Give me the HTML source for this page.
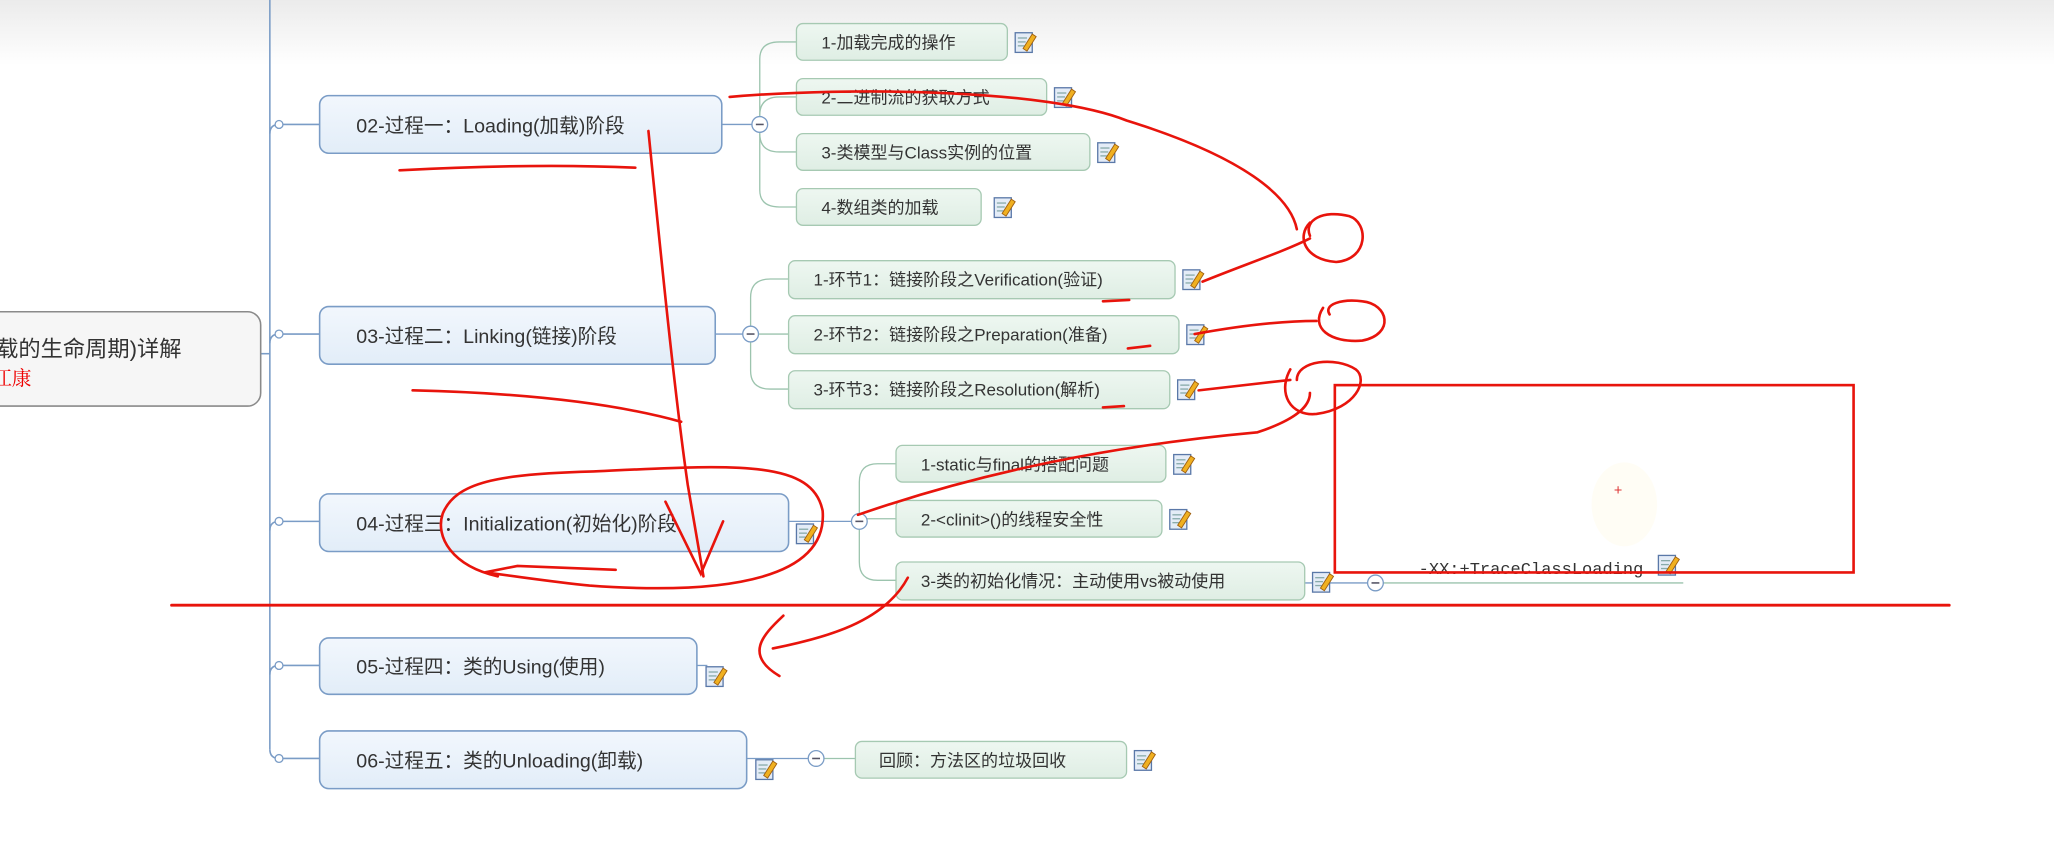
<!DOCTYPE html>
<html><head><meta charset="utf-8"><style>
html,body{margin:0;padding:0;background:#fff;width:2054px;height:841px;overflow:hidden}
svg{display:block}
text{font-family:"Liberation Sans","Noto Sans CJK SC",sans-serif;fill:#333}
</style></head><body>
<svg width="2054" height="841" viewBox="0 0 1568 642" preserveAspectRatio="none" xmlns="http://www.w3.org/2000/svg">
<defs>
<linearGradient id="top" x1="0" y1="0" x2="0" y2="1"><stop offset="0" stop-color="#ebebeb"/><stop offset="1" stop-color="#fff"/></linearGradient>
<linearGradient id="bx" x1="0" y1="0" x2="0" y2="1"><stop offset="0" stop-color="#f2f7fd"/><stop offset="1" stop-color="#e2edf8"/></linearGradient>
<linearGradient id="sb" x1="0" y1="0" x2="0" y2="1"><stop offset="0" stop-color="#eef7f1"/><stop offset="1" stop-color="#dfeee4"/></linearGradient>
<g id="note"><rect x="0" y="0" width="13" height="15" fill="#e4ecf7" stroke="#5a78a8" stroke-width="1"/><line x1="2" y1="4" x2="9" y2="4" stroke="#8aa" /><line x1="2" y1="7" x2="8" y2="7" stroke="#8aa"/><line x1="2" y1="10" x2="7" y2="10" stroke="#8aa"/><path d="M6 12 L13 1 L16 3 L9 14 Z" fill="#f0b020" stroke="#a06010" stroke-width="0.7"/></g>
</defs>
<rect x="0" y="0" width="1568" height="50" fill="url(#top)"/>
<line x1="206" y1="0" x2="206" y2="572" stroke="#7a9cc6" stroke-width="1.2"/>
<g fill="none" stroke="#7a9cc6" stroke-width="1.2">
<path d="M206 102 Q206 95 213 95 L244 95"/><path d="M206 262 Q206 255 213 255 L244 255"/>
<path d="M206 405 Q206 398 213 398 L244 398"/><path d="M206 515 Q206 508 213 508 L244 508"/>
<path d="M206 572 Q206 579 213 579 L244 579"/><line x1="199" y1="270" x2="206" y2="270"/>
</g>
<g fill="#fff" stroke="#7a9cc6"><circle cx="213" cy="95" r="3"/><circle cx="213" cy="255" r="3"/><circle cx="213" cy="398" r="3"/><circle cx="213" cy="508" r="3"/><circle cx="213" cy="579" r="3"/></g>
<rect x="-20" y="238" width="219" height="72" rx="10" fill="#f6f6f6" stroke="#8a8a8a" stroke-width="1.2"/>
<text x="-3" y="272" font-size="17" fill="#222">载的生命周期)详解</text>
<text x="-6" y="294" font-size="15" style="fill:#e00;font-family:'Noto Serif CJK SC',serif">江康</text>
<g stroke="#7a9cc6" stroke-width="1.2" fill="url(#bx)">
<rect x="244" y="73" width="307" height="44" rx="7"/><rect x="244" y="234" width="302" height="44" rx="7"/>
<rect x="244" y="377" width="358" height="44" rx="7"/><rect x="244" y="487" width="288" height="43" rx="7"/>
<rect x="244" y="558" width="326" height="44" rx="7"/>
</g>
<g font-size="15">
<text x="272" y="101">02-过程一：Loading(加载)阶段</text>
<text x="272" y="262">03-过程二：Linking(链接)阶段</text>
<text x="272" y="405">04-过程三：Initialization(初始化)阶段</text>
<text x="272" y="514">05-过程四：类的Using(使用)</text>
<text x="272" y="586">06-过程五：类的Unloading(卸载)</text>
</g>
<g fill="none" stroke="#9cc4ae" stroke-width="1">
<path d="M580 95 L580 45 Q580 32 595 32 L608 32"/><path d="M580 88 Q580 74 595 74 L608 74"/>
<path d="M580 102 Q580 116 595 116 L608 116"/><path d="M580 95 L580 145 Q580 158 595 158 L608 158"/>
<path d="M573 255 L573 227 Q573 213 588 213 L602 213"/><path d="M573 255 L602 255"/>
<path d="M573 255 L573 283 Q573 297 588 297 L602 297"/>
<path d="M656 398 L656 368 Q656 354 670 354 L684 354"/><path d="M656 398 L656 396 L684 396"/>
<path d="M656 398 L656 429 Q656 443 670 443 L684 443"/>
<path d="M623 579 L653 579"/><path d="M1050 445 L1285 445"/>
</g>
<g fill="none" stroke="#7a9cc6"><line x1="551" y1="95" x2="574" y2="95"/><line x1="546" y1="255" x2="567" y2="255"/><line x1="602" y1="398" x2="650" y2="398"/><line x1="570" y1="579" x2="617" y2="579"/><line x1="996" y1="445" x2="1044" y2="445"/><line x1="532" y1="508" x2="540" y2="508"/></g>
<g fill="#fff" stroke="#7a9cc6" stroke-width="1"><circle cx="580" cy="95" r="6"/><circle cx="573" cy="255" r="6"/><circle cx="656" cy="398" r="6"/><circle cx="623" cy="579" r="6"/><circle cx="1050" cy="445" r="6"/></g>
<g stroke="#556" stroke-width="1.2"><line x1="577" y1="95" x2="583" y2="95"/><line x1="570" y1="255" x2="576" y2="255"/><line x1="653" y1="398" x2="659" y2="398"/><line x1="620" y1="579" x2="626" y2="579"/><line x1="1047" y1="445" x2="1053" y2="445"/></g>
<g stroke="#a6c9b2" stroke-width="1" fill="url(#sb)">
<rect x="608" y="18" width="161" height="28" rx="5"/><rect x="608" y="60" width="191" height="28" rx="5"/>
<rect x="608" y="102" width="224" height="28" rx="5"/><rect x="608" y="144" width="141" height="28" rx="5"/>
<rect x="602" y="199" width="295" height="29" rx="5"/><rect x="602" y="241" width="298" height="29" rx="5"/>
<rect x="602" y="283" width="291" height="29" rx="5"/>
<rect x="684" y="340" width="206" height="28" rx="5"/><rect x="684" y="382" width="203" height="28" rx="5"/>
<rect x="684" y="429" width="312" height="29" rx="5"/><rect x="653" y="566" width="207" height="28" rx="5"/>
</g>
<g font-size="13">
<text x="627" y="37">1-加载完成的操作</text><text x="627" y="79">2-二进制流的获取方式</text>
<text x="627" y="121">3-类模型与Class实例的位置</text><text x="627" y="163">4-数组类的加载</text>
<text x="621" y="218">1-环节1：链接阶段之Verification(验证)</text><text x="621" y="260">2-环节2：链接阶段之Preparation(准备)</text>
<text x="621" y="302">3-环节3：链接阶段之Resolution(解析)</text>
<text x="703" y="359">1-static与final的搭配问题</text><text x="703" y="401">2-&lt;clinit&gt;()的线程安全性</text>
<text x="703" y="448">3-类的初始化情况：主动使用vs被动使用</text><text x="671" y="585">回顾：方法区的垃圾回收</text>
<text x="1083" y="438" style="font-family:'Liberation Mono',monospace" font-size="13">-XX:+TraceClassLoading</text>
</g>
<g><use href="#note" x="775" y="25"/><use href="#note" x="805" y="67"/><use href="#note" x="838" y="109"/><use href="#note" x="759" y="151"/>
<use href="#note" x="903" y="206"/><use href="#note" x="906" y="248"/><use href="#note" x="899" y="290"/>
<use href="#note" x="896" y="347"/><use href="#note" x="893" y="389"/><use href="#note" x="1002" y="437"/><use href="#note" x="866" y="573"/>
<use href="#note" x="608" y="400"/><use href="#note" x="539" y="509"/><use href="#note" x="577" y="580"/><use href="#note" x="1266" y="424"/></g>
<ellipse cx="1240" cy="385" rx="25" ry="32" fill="#fffdf2" opacity="0.8"/>
<text x="1232" y="378" font-size="11" style="fill:#d33">+</text>
<g fill="none" stroke="#e8140c" stroke-width="2" stroke-linecap="round">
<rect x="1019" y="294" width="396" height="143" stroke-width="2"/>
<line x1="131" y1="462" x2="1488" y2="462" stroke-width="2.2"/>
<path d="M305 130 C380 126 440 126 485 128"/>
<path d="M495 100 C505 200 515 300 525 370 L537 440"/>
<path d="M557 74 C650 66 800 68 860 92 C950 120 985 150 990 175"/>
<path d="M1000 170 C990 180 995 198 1020 200 C1045 198 1045 170 1030 165 C1010 160 995 168 1000 180"/>
<path d="M918 215 C950 202 980 192 1000 182"/>
<path d="M912 255 C950 248 980 245 1005 245"/>
<path d="M1010 235 C1000 250 1015 262 1040 260 C1065 255 1060 232 1040 230 C1025 228 1010 232 1015 240"/>
<path d="M915 298 L985 290"/>
<path d="M985 282 C975 300 985 318 1005 316 C1035 312 1045 290 1035 282 C1020 272 990 275 990 290"/>
<path d="M655 393 C750 360 850 340 960 330 C990 320 1000 310 1000 300"/>
<path d="M315 298 C400 300 470 308 520 322"/>
<path d="M380 440 C345 432 332 410 338 392 C348 368 380 362 450 360 C560 355 620 350 628 390 C632 440 560 455 450 447 C420 444 395 440 370 437 L395 432 L470 435"/>
<path d="M508 383 L535 438 L552 398"/>
<path d="M693 441 C675 475 630 487 590 495 M598 470 C582 485 568 500 595 516"/>
<path d="M842 230 L862 229"/><path d="M861 266 L878 264"/><path d="M842 311 L858 310"/>
</g>
</svg>
</body></html>
